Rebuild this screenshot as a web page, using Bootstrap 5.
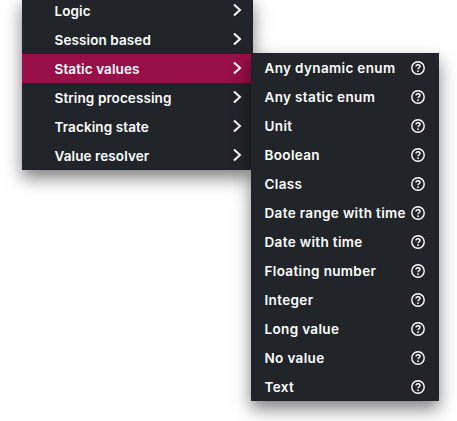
<!DOCTYPE html>
<html lang="en">
<head>
  <meta charset="UTF-8" />
  <meta name="viewport" content="width=device-width, initial-scale=1" />
  <title>Menu</title>
  <link href="https://cdn.jsdelivr.net/npm/bootstrap@5.3.3/dist/css/bootstrap.min.css" rel="stylesheet" />
  <style>
    html, body {
      height: 100%;
      overflow: hidden;
      background: #fff;
    }

    .menu-panel {
      background-color: #212529;
      font-family: "Inter", "Open Sans", sans-serif;
      font-size: 13.5px;
      font-weight: 600;
      letter-spacing: .1px;
      color: #fff;
      box-shadow: 0 8px 16px rgba(0, 0, 0, .5);
    }

    .menu-main {
      width: 231px;
      margin: -4px 0 0 22px;
    }

    .menu-sub {
      width: 188px;
      top: -1px;
      left: 100%;
      margin-left: -2px;
      z-index: 2;
      letter-spacing: .35px;
    }

    .menu-row {
      height: 29px;
      white-space: nowrap;
    }

    .menu-row span {
      padding-top: 2px;
    }

    .menu-main .menu-row {
      padding: 0 11px 0 32.5px;
    }

    .menu-sub .menu-row {
      padding: 0 14px 0 13.5px;
    }

    .menu-row.picked {
      background-color: #990f47;
    }

    .chev {
      width: 10px;
      height: 14px;
      margin-top: -2px;
    }

    .help {
      width: 14px;
      height: 14px;
    }
  </style>
</head>
<body>

  <svg class="d-none">
    <symbol id="chev" viewBox="0 0 10 14"><path d="M2 1.5 8 7 2 12.5" fill="none" stroke="#fff" stroke-width="2"/></symbol>
    <symbol id="help" viewBox="0 0 14 14">
      <circle cx="7" cy="7" r="6.2" fill="none" stroke="#fff" stroke-width="1.4"/>
      <path d="M5 5.6C5 4.4 5.9 3.7 7 3.7S9 4.4 9 5.4C9 6.7 7 6.8 7 8.2" fill="none" stroke="#fff" stroke-width="1.4"/>
      <rect x="6.2" y="9.4" width="1.6" height="1.5" fill="#fff"/>
    </symbol>
  </svg>

  <div class="menu-panel menu-main">
    <div class="menu-row d-flex align-items-center justify-content-between"><span>Logic</span><svg class="chev"><use href="#chev"/></svg></div>
    <div class="menu-row d-flex align-items-center justify-content-between"><span>Session based</span><svg class="chev"><use href="#chev"/></svg></div>
    <div class="position-relative">
      <div class="menu-row picked d-flex align-items-center justify-content-between"><span>Static values</span><svg class="chev"><use href="#chev"/></svg></div>
      <div class="menu-panel menu-sub position-absolute">
        <div class="menu-row d-flex align-items-center justify-content-between"><span>Any dynamic enum</span><svg class="help"><use href="#help"/></svg></div>
        <div class="menu-row d-flex align-items-center justify-content-between"><span>Any static enum</span><svg class="help"><use href="#help"/></svg></div>
        <div class="menu-row d-flex align-items-center justify-content-between"><span>Unit</span><svg class="help"><use href="#help"/></svg></div>
        <div class="menu-row d-flex align-items-center justify-content-between"><span>Boolean</span><svg class="help"><use href="#help"/></svg></div>
        <div class="menu-row d-flex align-items-center justify-content-between"><span>Class</span><svg class="help"><use href="#help"/></svg></div>
        <div class="menu-row d-flex align-items-center justify-content-between"><span>Date range with time</span><svg class="help"><use href="#help"/></svg></div>
        <div class="menu-row d-flex align-items-center justify-content-between"><span>Date with time</span><svg class="help"><use href="#help"/></svg></div>
        <div class="menu-row d-flex align-items-center justify-content-between"><span>Floating number</span><svg class="help"><use href="#help"/></svg></div>
        <div class="menu-row d-flex align-items-center justify-content-between"><span>Integer</span><svg class="help"><use href="#help"/></svg></div>
        <div class="menu-row d-flex align-items-center justify-content-between"><span>Long value</span><svg class="help"><use href="#help"/></svg></div>
        <div class="menu-row d-flex align-items-center justify-content-between"><span>No value</span><svg class="help"><use href="#help"/></svg></div>
        <div class="menu-row d-flex align-items-center justify-content-between"><span>Text</span><svg class="help"><use href="#help"/></svg></div>
      </div>
    </div>
    <div class="menu-row d-flex align-items-center justify-content-between"><span>String processing</span><svg class="chev"><use href="#chev"/></svg></div>
    <div class="menu-row d-flex align-items-center justify-content-between"><span>Tracking state</span><svg class="chev"><use href="#chev"/></svg></div>
    <div class="menu-row d-flex align-items-center justify-content-between"><span>Value resolver</span><svg class="chev"><use href="#chev"/></svg></div>
  </div>

  <script src="https://cdn.jsdelivr.net/npm/bootstrap@5.3.3/dist/js/bootstrap.bundle.min.js"></script>
</body>
</html>
